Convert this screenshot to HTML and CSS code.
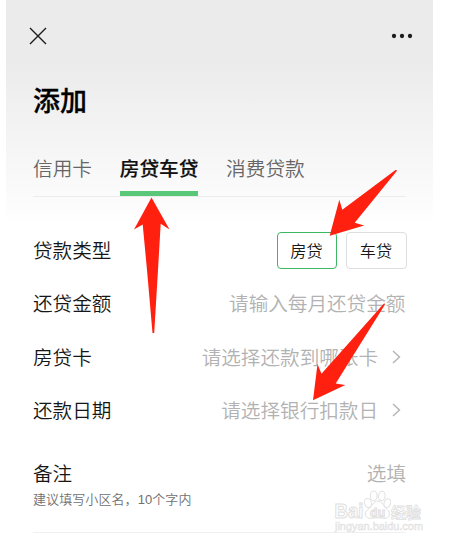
FILE: index.html
```html
<!DOCTYPE html>
<html lang="zh-CN">
<head>
<meta charset="utf-8">
<title>添加</title>
<link rel="stylesheet" href="styles.css">
</head>
<body>
<main class="screen">
  <header class="bar">
    <svg class="close" viewBox="0 0 18 18"><path d="M1 1L17 17M17 1L1 17"/></svg>
    <svg class="more" viewBox="0 0 22 6"><circle cx="3" cy="3" r="2.15"/><circle cx="11" cy="3" r="2.15"/><circle cx="19" cy="3" r="2.15"/></svg>
  </header>
  <h1 class="title">添加</h1>
  <nav class="tabs">
    <span class="tab">信用卡</span>
    <span class="tab active">房贷车贷</span>
    <span class="tab">消费贷款</span>
  </nav>
  <section class="form">
    <div class="row"><span>贷款类型</span><div class="options"><button class="option selected">房贷</button><button class="option">车贷</button></div></div>
    <div class="row"><span>还贷金额</span><span class="value">请输入每月还贷金额</span></div>
    <div class="row"><span>房贷卡</span><span class="value">请选择还款到哪张卡<svg class="chevron" viewBox="0 0 9 14"><path d="M1 1L7.5 7L1 13"/></svg></span></div>
    <div class="row"><span>还款日期</span><span class="value">请选择银行扣款日<svg class="chevron" viewBox="0 0 9 14"><path d="M1 1L7.5 7L1 13"/></svg></span></div>
    <div class="note">
      <div class="note-head"><span>备注</span><span class="value">选填</span></div>
      <p class="hint">建议填写小区名，10个字内</p>
    </div>
  </section>
</main>
<svg class="overlay" viewBox="0 0 451 545">
  <g class="watermark">
    <text class="brand" x="334.500" y="518" textLength="29" lengthAdjust="spacingAndGlyphs">Bai</text>
    <g class="paw">
      <ellipse cx="368" cy="503" rx="3.4" ry="4.6" transform="rotate(-15 368 503)"/>
      <ellipse cx="373.7" cy="495.8" rx="3.3" ry="4.7"/>
      <ellipse cx="381.8" cy="496" rx="3.3" ry="4.7" transform="rotate(8 381.8 496)"/>
      <ellipse cx="387.3" cy="503.2" rx="3.2" ry="4.5" transform="rotate(18 387.3 503.2)"/>
      <path d="M378 501C373 501 372 507 368 509.500C363 513 365.500 518.800 371 518.300C376 517.600 380 517.600 384 518.300C389.500 519 391.500 513 387 509.500C383.500 507 382.500 501 378 501Z"/>
    </g>
    <text class="du" x="370" y="517" textLength="15">du</text>
    <text class="brand cn" x="391" y="518" textLength="30">经验</text>
    <text class="url" x="335" y="530" textLength="88" lengthAdjust="spacingAndGlyphs">jingyan.baidu.com</text>
  </g>
  <g class="arrows">
    <path d="M151.500 197.500L169.500 229.500L160.700 223.800L158 270L154.200 333H152.500L147 270L142.700 224.500L134 229.500Z"/>
    <path d="M329.700 235.700L339.300 199.700L342.300 209.700L395.500 170Q397 169.500 396.800 171L354.700 222.700L364.200 225.500Z"/>
    <path d="M313 400.300L317.500 364L321.500 373.700L384 303.600Q385.500 303.500 384.700 305L335.700 383.400L345.300 385Z"/>
  </g>
</svg>
</body>
</html>
```
FILE: styles.css
```css
* { box-sizing: border-box; }
body {
  margin: 0;
  background: #fff;
  font-family: "Noto Sans CJK SC", sans-serif;
  color: #161616;
}
.screen {
  width: 427px;
  height: 545px;
  margin-left: 6px;
  padding: 0 27px;
  background: linear-gradient(#ebebeb 0, #ebebeb 62px, #fdfdfd 212px, #fff 222px);
}
.bar {
  display: flex;
  align-items: center;
  justify-content: space-between;
  height: 72px;
  margin: 0 -7px 0 -4.500px;
}
.close { width: 18px; height: 18px; fill: none; stroke: #1c1c1c; stroke-width: 1.4; }
.more { width: 22px; height: 6px; fill: #1c1c1c; }
.title {
  margin: 0;
  height: 56px;
  font-size: 27px;
  line-height: 55px;
  font-weight: 500;
  -webkit-text-stroke: 0.3px #000;
  color: #000;
}
.tabs {
  display: flex;
  gap: 27.800px;
  height: 69px;
  padding-top: 16px;
  border-bottom: 1px solid #ececec;
}
.tab {
  height: 52px;
  font-size: 19.650px;
  line-height: 48px;
  font-weight: 350;
  color: #666;
}
.active { color: #111; font-weight: 500; -webkit-text-stroke: 0.2px #111; border-bottom: 5px solid #58c878; }
.form { padding-top: 26px; font-size: 19.600px; font-weight: 350; }
.row {
  display: flex;
  align-items: center;
  justify-content: space-between;
  height: 53.500px;
}
.row > span { margin-top: -1px; }
.value { display: flex; align-items: center; color: #b2b2b2; font-weight: 350; }
.row .value { margin-right: 0.6px; }
.chevron {
  width: 9px;
  height: 14px;
  margin: 1px 4.400px 0 14px;
  fill: none;
  stroke: #b3b3b3;
  stroke-width: 1.4;
}
.options { display: flex; gap: 9px; padding-top: 1px; margin-right: -1px; }
.option {
  width: 61px;
  height: 37px;
  padding: 0 1px 0 0;
  border: 1px solid #dedede;
  border-radius: 4px;
  background: #fff;
  color: #161616;
  font: 350 16.200px "Noto Sans CJK SC", sans-serif;
}
.selected { width: 60px; border-color: #3cb762; }
.note { height: 96px; padding-top: 21px; border-bottom: 1px solid #f0f0f0; }
.note-head { display: flex; justify-content: space-between; line-height: 30px; }
.hint { margin: 1px 0 0; font: 350 13px/22px "Liberation Sans", "Noto Sans CJK SC", sans-serif; letter-spacing: 0.08px; color: #707070; }
.overlay { position: absolute; left: 0; top: 0; width: 451px; height: 545px; }
.arrows { fill: #ff2010; }
.watermark { fill: #fff; stroke: #e0e0e0; stroke-width: 1; }
.brand { font: 700 20px "Liberation Sans", sans-serif; }
.cn { font: 700 15px "Noto Sans CJK SC", sans-serif; stroke-width: 0.8; }
.du { font: 700 12px "Liberation Sans", sans-serif; }
.url { font: 400 11px "Liberation Sans", sans-serif; stroke-width: 0.4; fill: #ececec; }
```
